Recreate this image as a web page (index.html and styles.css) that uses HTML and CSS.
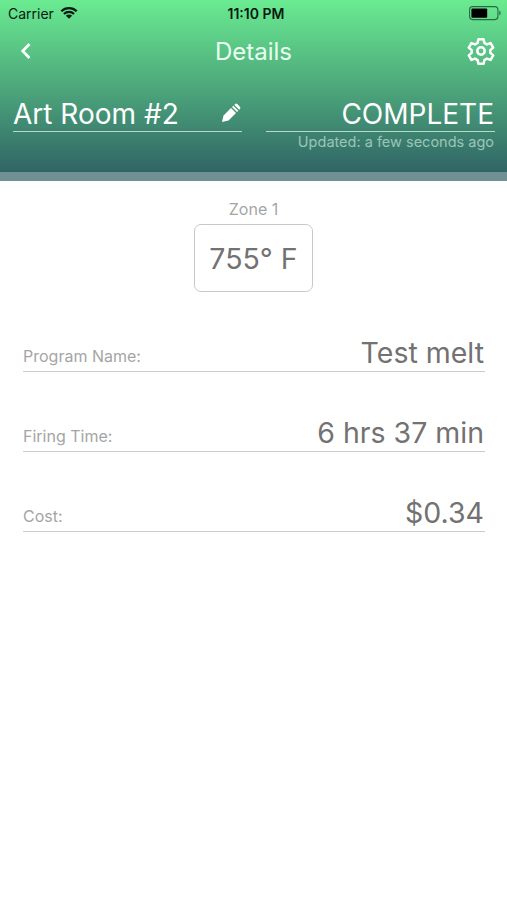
FILE: index.html
```html
<!DOCTYPE html>
<html lang="en">
<head>
<meta charset="utf-8">
<title>Details</title>
<link rel="stylesheet" href="styles.css">
</head>
<body>
<header class="header">
  <div class="status">
    <div class="carrier"><span class="carrier-name">Carrier</span>
      <svg class="wifi" viewBox="0 0 18 13" width="18" height="13"><path d="M1.3 5.2a11 11 0 0 1 15.4 0M4 8a7.1 7.1 0 0 1 10 0" fill="none" stroke="#071b0f" stroke-width="2.3"/><path d="M5.9 9.7a4.4 4.4 0 0 1 6.2 0L9 12.8z" fill="#071b0f"/></svg>
    </div>
    <div class="clock"><span class="clock-text">11:10 PM</span></div>
    <div class="power"><svg viewBox="0 0 33 15" width="33" height="15"><rect x=".6" y=".6" width="28.3" height="13" rx="3" fill="none" stroke="#286b42" stroke-width="1.1"/><rect x="2.4" y="2.4" width="15.8" height="9.4" rx="1" fill="#000"/><path d="M30.3 4.8c1.8.5 1.8 4.1 0 4.6z" fill="#286b42"/></svg></div>
  </div>
  <nav class="nav">
    <div class="side"><svg class="back" viewBox="0 0 12 18" width="12" height="18"><path d="M9.5 2 2.7 9l6.8 7" fill="none" stroke="#fff" stroke-width="2.7"/></svg></div>
    <h1 class="title"><span class="title-text">Details</span></h1>
    <div class="side end"><svg viewBox="0 0 28 28" width="28" height="28" fill="none" stroke="#fff" stroke-width="2.5" stroke-linejoin="round"><path d="M11.4 2.2h5.2l.8 3.7 2.5 1.5 3.7-1.3 2.6 4.5-2.9 2.5v2.8l2.9 2.5-2.6 4.5-3.7-1.3-2.5 1.5-.8 3.7h-5.2l-.8-3.7-2.5-1.5-3.7 1.3-2.6-4.5 2.9-2.5v-2.8l-2.9-2.5 2.6-4.5 3.7 1.3 2.5-1.5z"/><circle cx="14" cy="14" r="3.7"/></svg></div>
  </nav>
  <div class="summary">
    <div class="field"><span class="name">Art Room #2</span>
      <svg class="pencil" viewBox="0 0 20 20" width="20" height="20" fill="#fff"><path d="M1 19 2.5 12.5 10 5l5 5-7.500 7.500zM11 4l1.300-1.300 5 5L16 9zM13.300 1.900l.8-.8q1.100-1 2.200 0l2.600 2.600q1.100 1.100 0 2.200l-.7.800z"/></svg>
    </div>
    <div class="field state"><span class="state-text">COMPLETE</span></div>
  </div>
  <div class="updated"><span class="updated-text">Updated: a few seconds ago</span></div>
</header>
<main class="content">
  <section class="zone">
    <div class="zone-label">Zone 1</div>
    <div class="reading"><span class="temp">755° F</span></div>
  </section>
  <section class="rows">
    <div class="row"><span class="label program">Program Name:</span><span class="value melt">Test melt</span></div>
    <div class="row"><span class="label firing">Firing Time:</span><span class="value time">6 hrs 37 min</span></div>
    <div class="row"><span class="label cost">Cost:</span><span class="value price">$0.34</span></div>
  </section>
</main>
</body>
</html>
```
FILE: styles.css
```css
* { box-sizing: border-box; }
body { margin: 0; width: 507px; height: 900px; overflow: hidden; background: #fff; font-family: Inter, "Liberation Sans", sans-serif; color: #737171; }
svg { display: block; flex: none; }
span { white-space: nowrap; }
.header { height: 181px; border-bottom: 9px solid #6f9195; background: linear-gradient(#6aeb91, #306566) padding-box; color: #fff; }
.status { height: 27px; display: grid; grid-template-columns: 1fr 1fr 1fr; color: #071b0f; font-size: 14px; line-height: 27px; }
.carrier { display: flex; padding-left: 8px; gap: 6px; }
.wifi { margin-top: 6px; }
.clock { text-align: center; font-weight: 600; padding-left: 5px; }
.power { display: flex; justify-content: flex-end; padding: 6px 5px 0 0; }
.nav { height: 50px; display: grid; grid-template-columns: 1fr 2fr 1fr; }
.side { padding: 15px 0 0 20px; }
.side.end { display: flex; justify-content: flex-end; padding: 10px 12px 0 0; }
.title { margin: 0; font-size: 24px; line-height: 50px; font-weight: 400; text-align: center; color: #e9fff0; }
.summary { display: flex; justify-content: space-between; padding: 18px 12px 0 13px; }
.field { width: 229px; height: 37px; display: flex; justify-content: space-between; border-bottom: 1px solid #b7d8ca; font-size: 28px; line-height: 38px; }
.pencil { margin: 8px 1px 0 0; }
.state { justify-content: flex-end; padding-right: 1px; }
.updated { text-align: right; padding-right: 13px; font-size: 14.500px; line-height: 20px; color: #9bc6b7; }
.zone { display: flex; flex-direction: column; align-items: center; padding-top: 18px; }
.zone-label { font-size: 16px; line-height: 20px; color: #a5a5a5; }
.reading { width: 119px; height: 68px; margin-top: 5px; border: 1px solid #c9c9c9; border-radius: 7px; text-align: center; font-size: 28.500px; line-height: 68px; }
.rows { padding: 0 22px 0 23px; }
.row { height: 80px; display: flex; justify-content: space-between; align-items: flex-end; border-bottom: 1px solid #ccc; }
.label { font-size: 16px; line-height: 20px; padding-bottom: 5px; color: #a5a5a5; }
.value { font-size: 28.500px; line-height: 36px; padding-right: 1px; }
```
